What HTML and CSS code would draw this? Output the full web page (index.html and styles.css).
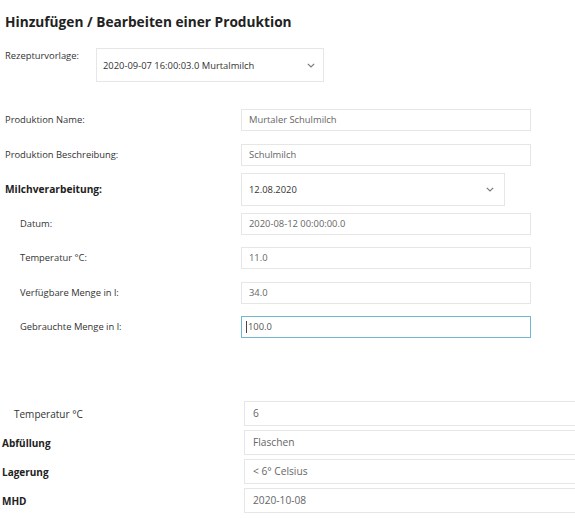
FILE: index.html
```html
<!DOCTYPE html>
<html lang="de">
<head>
<meta charset="utf-8">
<title>Produktion</title>
<link rel="stylesheet" href="styles.css">
</head>
<body>
<div class="page">
  <h1 class="title">Hinzufügen / Bearbeiten einer Produktion</h1>

  <div class="template-row">
    <span class="label label-top">Rezepturvorlage:</span>
    <div class="select select-template">
      <span class="select-text">2020-09-07 16:00:03.0 Murtalmilch</span>
      <svg class="chevron" width="8" height="5" viewBox="0 0 8 5"><polyline points="0.8,0.8 4,4 7.2,0.8" fill="none" stroke="#7a7a7a" stroke-width="1.2"/></svg>
    </div>
  </div>

  <div class="form">
    <div class="row">
      <span class="label">Produktion Name:</span>
      <div class="field">Murtaler Schulmilch</div>
    </div>
    <div class="row">
      <span class="label">Produktion Beschreibung:</span>
      <div class="field">Schulmilch</div>
    </div>
    <div class="row">
      <span class="label label-bold">Milchverarbeitung:</span>
      <div class="select select-milk">
        <span class="select-text">12.08.2020</span>
        <svg class="chevron" width="8" height="5" viewBox="0 0 8 5"><polyline points="0.8,0.8 4,4 7.2,0.8" fill="none" stroke="#7a7a7a" stroke-width="1.2"/></svg>
      </div>
    </div>
    <div class="row">
      <span class="label label-indent">Datum:</span>
      <div class="field">2020-08-12 00:00:00.0</div>
    </div>
    <div class="row">
      <span class="label label-indent">Temperatur °C:</span>
      <div class="field">11.0</div>
    </div>
    <div class="row">
      <span class="label label-indent">Verfügbare Menge in l:</span>
      <div class="field">34.0</div>
    </div>
    <div class="row">
      <span class="label label-indent">Gebrauchte Menge in l:</span>
      <div class="field field-focus"><span class="caret"></span>100.0</div>
    </div>
  </div>

  <div class="extra">
    <div class="extra-row">
      <span class="extra-label extra-indent">Temperatur °C</span>
      <div class="extra-field">6</div>
    </div>
    <div class="extra-row">
      <span class="extra-label extra-bold">Abfüllung</span>
      <div class="extra-field">Flaschen</div>
    </div>
    <div class="extra-row">
      <span class="extra-label extra-bold">Lagerung</span>
      <div class="extra-field">&lt; 6° Celsius</div>
    </div>
    <div class="extra-row">
      <span class="extra-label extra-bold">MHD</span>
      <div class="extra-field">2020-10-08</div>
    </div>
  </div>
</div>
</body>
</html>
```
FILE: styles.css
```css
* { box-sizing: border-box; }
html, body {
  margin: 0;
  padding: 0;
  background: #ffffff;
}
body {
  font-family: "Open Sans", "Noto Sans", "Liberation Sans", sans-serif;
  color: #333333;
}
.page {
  width: 575px;
}
.title {
  margin: 12px 0 0 5px;
  font-size: 13.7px;
  line-height: 20px;
  font-weight: 700;
  color: #222222;
}
.template-row {
  display: flex;
  margin-top: 16px;
  height: 34px;
}
.label {
  font-size: 9.4px;
  line-height: 16px;
  color: #333333;
  padding-left: 5px;
}
.label-top {
  width: 96px;
  align-self: flex-start;
}
.label-bold {
  font-weight: 700;
  font-size: 10.2px;
  color: #222222;
}
.label-indent {
  padding-left: 20px;
}
.select {
  display: flex;
  align-items: center;
  justify-content: space-between;
  border: 1px solid #e6e6e6;
  background: #ffffff;
  font-size: 9.4px;
  color: #333333;
}
.select-template {
  width: 228px;
  height: 34px;
  padding: 0 8px 0 6px;
}
.select-milk {
  width: 264px;
  height: 33px;
  padding: 0 10px 0 7px;
}
.chevron {
  display: block;
  flex: none;
}
.form {
  margin-top: 20.75px;
  display: grid;
  grid-template-columns: 241px 290px;
  grid-auto-rows: 34.5px;
  align-items: center;
}
.row {
  display: contents;
}
.field {
  height: 22px;
  border: 1px solid #e6e6e6;
  padding: 0 7px;
  font-size: 9.4px;
  line-height: 20px;
  color: #666666;
  display: flex;
  align-items: center;
}
.field-focus {
  border-color: #72b6cf;
  padding-left: 4px;
  color: #555555;
}
.caret {
  display: inline-block;
  width: 1px;
  height: 12px;
  background: #444444;
  margin-right: 1px;
}
.extra {
  margin-top: 57px;
  display: grid;
  grid-template-columns: 244px 1fr;
  grid-auto-rows: 25px;
  row-gap: 4px;
  align-items: center;
}
.extra-row {
  display: contents;
}
.extra-label {
  font-size: 10px;
  line-height: 16px;
  color: #333333;
  padding-left: 2px;
}
.extra-indent {
  padding-left: 14px;
}
.extra-bold {
  font-weight: 700;
  color: #222222;
}
.extra-field {
  height: 25px;
  border: 1px solid #e6e6e6;
  border-right: none;
  padding: 0 8px;
  font-size: 10.2px;
  line-height: 23px;
  color: #666666;
}
```
